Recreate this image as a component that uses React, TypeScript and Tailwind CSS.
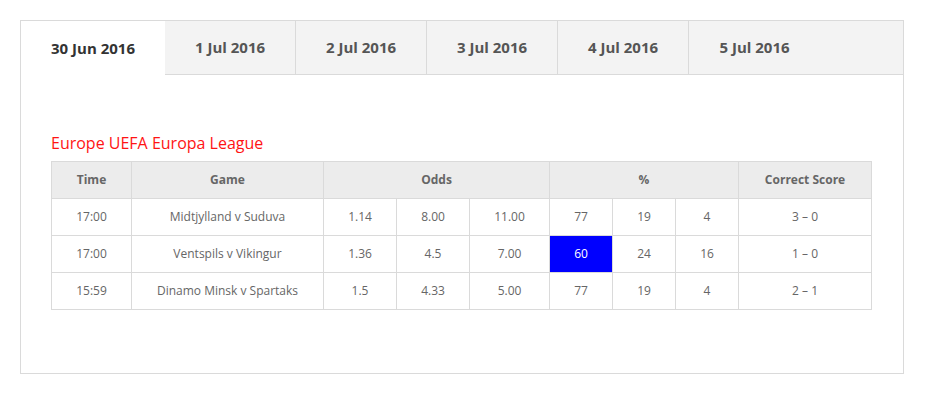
import React from "react";

const tabs = ["30 Jun 2016", "1 Jul 2016", "2 Jul 2016", "3 Jul 2016", "4 Jul 2016", "5 Jul 2016"];

type Row = {
  time: string;
  game: string;
  odds: [string, string, string];
  pct: [string, string, string];
  hot?: number;
  score: string;
};

const rows: Row[] = [
  { time: "17:00", game: "Midtjylland v Suduva", odds: ["1.14", "8.00", "11.00"], pct: ["77", "19", "4"], score: "3 – 0" },
  { time: "17:00", game: "Ventspils v Vikingur", odds: ["1.36", "4.5", "7.00"], pct: ["60", "24", "16"], hot: 0, score: "1 – 0" },
  { time: "15:59", game: "Dinamo Minsk v Spartaks", odds: ["1.5", "4.33", "5.00"], pct: ["77", "19", "4"], score: "2 – 1" },
];

const cell = "border border-[#dadada] text-center h-[37px] p-0";

export default function App() {
  return (
    <div className="min-h-[396px] bg-white pt-5 pl-5 font-['Open_Sans','Liberation_Sans',sans-serif]">
      <div className="w-[884px] h-[354px] border border-[#dadada]">
        {/* date tabs */}
        <div className="flex h-[54px] bg-[#f3f3f3]">
          {tabs.map((t, i) => (
            <div
              key={t}
              className={
                i === 0
                  ? "w-[144px] flex items-center justify-center bg-white text-[15px] font-bold text-[#333]"
                  : i === tabs.length - 1
                    ? "w-[131px] flex items-center justify-center border-b border-[#dadada] text-[15px] font-bold text-[#555]"
                    : "w-[131px] flex items-center justify-center border-b border-l-0 border-r border-[#dadada] text-[15px] font-bold text-[#555]" +
                      (i === 1 ? " border-l" : "")
              }
            >
              {t}
            </div>
          ))}
          <div className="flex-1 border-b border-[#dadada]" />
        </div>

        <div className="pl-[30px] pt-[57px]">
          <h2 className="text-[16px] leading-[22px] text-[#ff1414] mb-[7px]">Europe UEFA Europa League</h2>
          <table className="border-collapse table-fixed w-[820px] text-[12px] text-[#666]">
            <colgroup>
              <col className="w-[80px]" />
              <col className="w-[192px]" />
              <col className="w-[73px]" />
              <col className="w-[73px]" />
              <col className="w-[80px]" />
              <col className="w-[63px]" />
              <col className="w-[63px]" />
              <col className="w-[63px]" />
              <col className="w-[133px]" />
            </colgroup>
            <thead>
              <tr className="bg-[#ececec] text-[#666] font-bold">
                <th className={cell}>Time</th>
                <th className={cell}>Game</th>
                <th className={cell} colSpan={3}>Odds</th>
                <th className={cell} colSpan={3}>%</th>
                <th className={cell}>Correct Score</th>
              </tr>
            </thead>
            <tbody>
              {rows.map((r) => (
                <tr key={r.game}>
                  <td className={cell}>{r.time}</td>
                  <td className={cell}>{r.game}</td>
                  {r.odds.map((o, i) => (
                    <td key={i} className={cell}>{o}</td>
                  ))}
                  {r.pct.map((p, i) => (
                    <td key={i} className={r.hot === i ? cell + " bg-[#0000ff] text-white" : cell}>
                      {p}
                    </td>
                  ))}
                  <td className={cell}>{r.score}</td>
                </tr>
              ))}
            </tbody>
          </table>
        </div>
      </div>
    </div>
  );
}
